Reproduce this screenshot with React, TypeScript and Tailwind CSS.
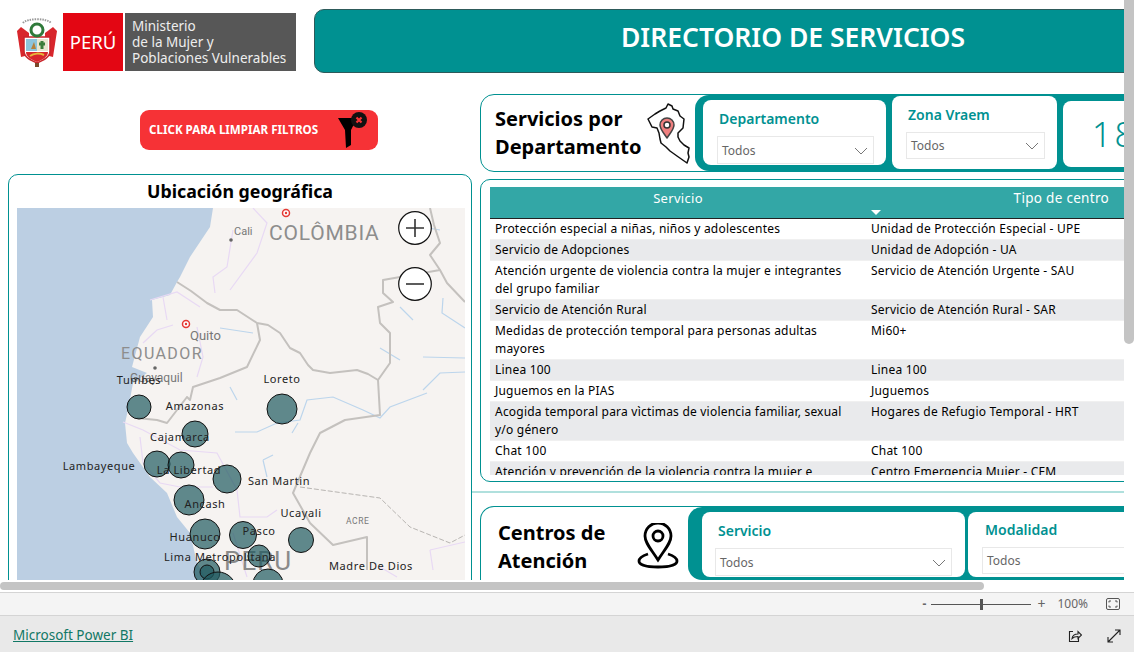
const rows = [
  { a: ["Protección especial a niñas, niños y adolescentes"], b: "Unidad de Protección Especial - UPE" },
  { a: ["Servicio de Adopciones"], b: "Unidad de Adopción - UA" },
  { a: ["Atención urgente de violencia contra la mujer e integrantes", "del grupo familiar"], b: "Servicio de Atención Urgente - SAU" },
  { a: ["Servicio de Atención Rural"], b: "Servicio de Atención Rural - SAR" },
  { a: ["Medidas de protección temporal para personas adultas", "mayores"], b: "Mi60+" },
  { a: ["Linea 100"], b: "Linea 100" },
  { a: ["Juguemos en la PIAS"], b: "Juguemos" },
  { a: ["Acogida temporal para vìctimas de violencia familiar, sexual", "y/o género"], b: "Hogares de Refugio Temporal - HRT" },
  { a: ["Chat 100"], b: "Chat 100" },
  { a: ["Atención y prevención de la violencia contra la mujer e"], b: "Centro Emergencia Mujer - CEM" },
];

const bubbles = [
  [139, 407, 12], [282, 409, 15], [195, 434, 13], [157, 464, 13], [181, 465, 13],
  [227, 479, 14], [189, 500, 15], [205, 534, 15], [243, 535, 13.5], [301, 540, 12.5],
  [259, 556, 11], [207, 572, 13], [207, 572, 7], [218, 590, 18], [268, 584, 15],
];

const places: [string, number, number][] = [
  ["Tumbes", 139, 380], ["Loreto", 282, 379], ["Amazonas", 195, 406], ["Cajamarca", 180, 437],
  ["Lambayeque", 99, 466], ["La Libertad", 189, 470], ["San Martin", 279, 481], ["Ancash", 205, 504],
  ["Ucayali", 301, 513], ["Pasco", 259, 531], ["Huanuco", 195, 537], ["Lima Metropolitana", 220, 557],
  ["Madre De Dios", 371, 566],
];

function Chevron() {
  return (
    <svg width="14" height="8" viewBox="0 0 14 8" fill="none" stroke="#777" strokeWidth="1">
      <path d="M1 1l6 6 6-6" />
    </svg>
  );
}

function Dropdown({ className }: { className: string }) {
  return (
    <div className={`flex items-center justify-between border border-[#e8e8e8] pl-[4px] pr-[5px] pt-[1px] text-[12px] text-[#666] ${className}`}>
      <span>Todos</span>
      <Chevron />
    </div>
  );
}

function Escudo() {
  return (
    <svg width="42" height="54" viewBox="0 0 42 54">
      <path d="M5 12 1 16l4 26 8-2V18z" fill="#d8262c" />
      <path d="M37 12l4 4-4 26-8-2V18z" fill="#d8262c" />
      <path d="M8 22h26v14c0 6-6 9-13 12C14 45 8 42 8 36z" fill="#fff" stroke="#c9252b" strokeWidth="1.5" />
      <rect x="10" y="24" width="11" height="12" fill="#8cc4dc" />
      <rect x="21" y="24" width="11" height="12" fill="#e9e6cf" />
      <path d="M15 34l3-7 2 7z" fill="#b5803a" />
      <path d="M26 34v-8m-3 3h6" stroke="#3c7d3a" strokeWidth="3" />
      <path d="M10 37h22c0 5-6 8-11 10-5-2-11-5-11-10z" fill="#d8262c" />
      <path d="M14 41c4-3 10-3 14-1" stroke="#e6b93a" strokeWidth="2" fill="none" />
      <circle cx="21" cy="15" r="6" fill="none" stroke="#2f7a3a" strokeWidth="3" />
      <rect x="19" y="48" width="4" height="4" fill="#7a4a2a" />
      <path d="M7 8C11 3 31 3 35 8" fill="none" stroke="#999" strokeWidth="2" strokeDasharray="1.5 1" />
    </svg>
  );
}

function MapaPeru() {
  return (
    <svg width="44" height="62" viewBox="0 0 44 62" fill="none" stroke="#111" strokeWidth="1.5" strokeLinejoin="round">
      <path d="M21 1L19 5 13 8 8 11 1 16 3 20 5 24 10 25 12 30 13 36 14 40 19 44 23 48 30 53 40 60 42 54 41 50 42 45 37 42 33 38 31 34 31 30 36 25 37 16 33 13 31 8 26 6 25 3z" />
      <path d="M20 35c-4-6-7-9-7-13a7 7 0 0114 0c0 4-3 7-7 13z" fill="#f08080" stroke="#444" />
      <circle cx="20" cy="22" r="3" fill="#fff" stroke="#333" />
    </svg>
  );
}

function PinIcon() {
  return (
    <svg width="42" height="46" viewBox="0 0 42 46" fill="none" stroke="#000" strokeWidth="2.8">
      <path d="M21 37C14 26 8 20 8 13a13 13 0 0126 0c0 7-6 13-13 24z" />
      <circle cx="21" cy="13" r="5" />
      <path d="M11 31c-6 2-9 4-9 7 0 4 8 6 19 6s19-2 19-6c0-3-3-5-9-7" />
    </svg>
  );
}

function FunnelIcon() {
  return (
    <svg width="32" height="36" viewBox="0 0 32 36">
      <path d="M1 6h19l-6 12v15l-5 3-1-18z" fill="#000" />
      <circle cx="22" cy="8" r="8" fill="#111" />
      <path d="M19.500 5.500l5 5m0-5l-5 5" stroke="#f63236" strokeWidth="2.200" />
    </svg>
  );
}

function GeoMap() {
  return (
    <div className="relative h-[372px] w-[448px] shrink-0 overflow-hidden bg-[#bccfe3]">
      <svg className="block" width="448" height="372" viewBox="17 208 448 372" fill="none">
        <path
          d="M213 208L210 227 190 257 180 277 177 282 170 295 152 300 153 317 140 337 132 367 147 373 133 383 128 410 125 423 127 443 133 453 150 477 167 493 177 517 190 533 197 563 207 580H465V208Z"
          fill="#f6f3f1"
        />
        <g stroke="#e8d9f4" strokeWidth="1.2">
          <path d="M253 208L267 223 257 253 230 290M233 230L227 267 213 277 215 293" />
          <path d="M150 300L177 292 200 307M173 325L157 330 143 343M197 327L203 357 197 377M163 297L167 320" />
          <path d="M123 422L143 430 180 450 217 453 237 490 240 517 267 517 277 510M140 437L143 463 160 483 180 487 213 487M233 533L247 577" />
          <path d="M430 550L465 542M430 550L433 570M380 567L397 577" />
        </g>
        <g stroke="#bcd5ec" strokeWidth="1.2">
          <path d="M220 328L253 333M443 298L442 313 465 328M400 307L413 320M423 357L465 358M380 348L400 360" />
          <path d="M423 390L440 373 465 372M230 387L237 400M235 432L257 432 277 423 300 420 307 400 333 397 363 410 380 418 390 407 427 393" />
          <path d="M263 460L267 477M263 460L273 455M292 433L298 423M440 230L428 228" />
        </g>
        <g stroke="#c4c1be" strokeWidth="2" strokeLinejoin="round">
          <path d="M177 282L191 291 207 303 220 310 237 310 257 323 268 325 280 333 290 348 300 353 308 365 313 370 330 373 357 370 368 374 378 380" />
          <path d="M257 323L260 340 247 367 220 378 193 387 190 400 187 397 167 423 157 420 137 418" />
          <path d="M430 208L434 225 440 243 430 255 440 270 383 280V293L393 302 378 307 380 323 390 333V363L378 380 380 415 345 420 320 433 310 453 293 493 310 523 333 545 367 537V570" />
          <path d="M440 270L447 283 465 302" />
        </g>
        <path d="M300 487L380 498 410 527 450 543 465 535" stroke="#b8b5b2" strokeWidth="1" strokeDasharray="5 2" />
        <circle cx="286" cy="213" r="3.500" fill="#fff" stroke="#e53935" strokeWidth="1.500" />
        <circle cx="286" cy="213" r="1.200" fill="#e53935" />
        <circle cx="186" cy="324" r="3.500" fill="#fff" stroke="#e53935" strokeWidth="1.500" />
        <circle cx="186" cy="324" r="1.200" fill="#e53935" />
        <circle cx="231" cy="240" r="1.800" fill="#666" />
        <circle cx="155" cy="368" r="1.800" fill="#666" />
        <text x="234" y="235" fontSize="11" fill="#777" fontFamily="Roboto, sans-serif">Cali</text>
        <text x="269" y="240" fontSize="21" fill="#8d8d8d" letterSpacing="0.8" fontFamily="Roboto, sans-serif">COLÔMBIA</text>
        <text x="190" y="340" fontSize="13" fill="#777" fontFamily="Roboto, sans-serif">Quito</text>
        <text x="121" y="359" fontSize="16" fill="#8d8d8d" letterSpacing="1.400" fontFamily="Roboto, sans-serif">EQUADOR</text>
        <text x="130" y="382" fontSize="12" fill="#777" fontFamily="Roboto, sans-serif">Guayaquil</text>
        <text x="346" y="524" fontSize="8.500" fill="#777" letterSpacing="0.6" fontFamily="Roboto, sans-serif">ACRE</text>
        <text x="224" y="570" fontSize="26" fill="#8a8a8a" letterSpacing="1" fontFamily="Roboto, sans-serif">PERU</text>
        {bubbles.map(([cx, cy, r], i) => (
          <circle key={i} cx={cx} cy={cy} r={r} fill="#1f5a60" fillOpacity="0.7" stroke="#111" strokeWidth="1" />
        ))}
        {places.map(([name, x, y]) => (
          <text key={name} x={x} y={y + 4} textAnchor="middle" fontSize="11" fill="#222" letterSpacing="0.6">{name}</text>
        ))}
        <circle cx="415" cy="228" r="16.300" fill="#fff" stroke="#111" strokeWidth="1.200" />
        <path d="M406 228h18M415 219v18" stroke="#333" strokeWidth="1.600" />
        <circle cx="415" cy="284" r="16.300" fill="#fff" stroke="#111" strokeWidth="1.200" />
        <path d="M406 284h18" stroke="#333" strokeWidth="1.600" />
      </svg>
    </div>
  );
}

export default function App() {
  return (
    <div className="flex h-[652px] w-[1134px] flex-col overflow-hidden bg-white font-['Noto_Sans',sans-serif] text-black">
      <div className="flex h-[580px] shrink-0">
        <div className="w-[1124px] overflow-hidden">
          {/* cabecera */}
          <div className="flex h-[94px] pl-[16px] pt-[9px]">
            <div className="mt-[4px] flex h-[58px] w-[280px] shrink-0 items-center">
              <div className="w-[47px] shrink-0"><Escudo /></div>
              <div className="flex h-[58px] w-[60px] shrink-0 items-center justify-center bg-[#e30613] text-[18.5px] text-white">PERÚ</div>
              <div className="ml-[2px] flex h-[58px] w-[171px] shrink-0 flex-col justify-center bg-[#575757] pl-[7px] text-[13.5px] leading-[16px] text-[#eee]">
                <span>Ministerio</span>
                <span>de la Mujer y</span>
                <span className="whitespace-nowrap">Poblaciones Vulnerables</span>
              </div>
            </div>
            <div className="ml-[18px] flex h-[64px] w-[958px] shrink-0 items-center justify-center rounded-[10px] border border-[#2d5a5a] bg-[#009191] pb-[6px] text-[26.5px] font-semibold text-white">
              DIRECTORIO DE SERVICIOS
            </div>
          </div>

          <div className="flex">
            {/* columna izquierda */}
            <div className="w-[480px] shrink-0 pt-[16px]">
              <div className="ml-[140px] flex h-[40px] w-[238px] items-center justify-between rounded-[9px] bg-[#f63236] pl-[9px] pr-[9px] text-[11.6px] font-bold text-white">
                <span>CLICK PARA LIMPIAR FILTROS</span>
                <FunnelIcon />
              </div>
              <div className="ml-[8px] mt-[24px] h-[420px] w-[464px] rounded-t-[10px] border border-[#009191] px-[8px]">
                <div className="h-[33px] pt-[3px] text-center text-[17.8px] font-bold leading-[26px]">Ubicación geográfica</div>
                <GeoMap />
              </div>
            </div>

            {/* columna derecha */}
            <div className="w-[644px] shrink-0">
              <div className="flex h-[78px] w-[660px] rounded-l-[14px] border border-[#009191]">
                <div className="w-[151px] shrink-0 pl-[14px] pt-[10px] text-[20px] font-bold leading-[28px]">
                  Servicios por<br />Departamento
                </div>
                <div className="w-[63px] shrink-0 pl-[15px] pt-[8px]"><MapaPeru /></div>
                <div className="flex flex-1 gap-[6px] rounded-l-[14px] bg-[#009191] pl-[8px]">
                  <div className="mt-[5px] h-[65px] w-[183px] shrink-0 rounded-[8px] bg-white pl-[14px] pr-[12px] pt-[9px]">
                    <div className="h-[27px] pl-[2px] text-[14px] font-semibold leading-[20px] text-[#009191]">Departamento</div>
                    <Dropdown className="h-[28px] w-[157px]" />
                  </div>
                  <div className="mt-[1px] h-[73px] w-[165px] shrink-0 rounded-[8px] bg-white pl-[14px] pt-[9px]">
                    <div className="h-[27px] pl-[2px] text-[14px] font-semibold leading-[20px] text-[#009191]">Zona Vraem</div>
                    <Dropdown className="h-[27px] w-[139px]" />
                  </div>
                  <div className="mt-[6px] h-[66px] w-[120px] shrink-0 rounded-[8px] bg-white pl-[29px] text-[34px] font-light leading-[66px] tracking-[3px] text-[#009191]">
                    180
                  </div>
                </div>
              </div>

              <div className="mt-[7px] h-[303px] w-[660px] rounded-l-[10px] border border-[#009191] pl-[9px] pt-[7px]">
                <div className="h-[288px] overflow-hidden text-[12px]">
                  <div className="relative flex h-[32px] border-b border-[#222] bg-[#33a7a6] text-[13px] tracking-[0.3px] text-white">
                    <div className="w-[376px] shrink-0 pt-[2px] text-center leading-[18px]">Servicio</div>
                    <div className="w-[243px] shrink-0 whitespace-nowrap pt-[2px] text-right text-[13.5px] leading-[18px]">Tipo de centro</div>
                    <div className="absolute left-[381px] top-[23px] h-0 w-0 border-x-[5px] border-t-[5px] border-x-transparent border-t-white" />
                  </div>
                  {rows.map((row, i) => (
                    <div key={row.b} className={`flex border-b border-[#f0f0f0] pb-[1px] pt-[1px] leading-[18px] tracking-[0.21px] ${i % 2 ? "bg-[#e9eaec]" : "bg-white"}`}>
                      <div className="w-[381px] shrink-0 pl-[5px]">
                        {row.a.map(line => <div key={line}>{line}</div>)}
                      </div>
                      <div className="flex-1 whitespace-nowrap">{row.b}</div>
                    </div>
                  ))}
                </div>
              </div>

              <div className="-ml-[8px] mt-[9px] h-[2px] w-[660px] bg-[#b0e0dd]" />

              <div className="mt-[13px] flex h-[74px] w-[660px] rounded-tl-[14px] border-l border-t border-[#009191]">
                <div className="w-[145px] shrink-0 pl-[17px] pt-[12px] text-[20px] font-bold leading-[28px]">
                  Centros de<br />Atención
                </div>
                <div className="w-[62px] shrink-0 pl-[11px] pt-[16px]"><PinIcon /></div>
                <div className="flex flex-1 gap-[3px] rounded-l-[14px] bg-[#009191] pl-[14px] pt-[5px]">
                  <div className="h-[65px] w-[263px] shrink-0 rounded-[8px] bg-white pl-[13px] pt-[9px]">
                    <div className="h-[27px] pl-[3px] text-[14px] font-semibold leading-[20px] text-[#009191]">Servicio</div>
                    <Dropdown className="h-[28px] w-[237px]" />
                  </div>
                  <div className="h-[65px] w-[200px] shrink-0 rounded-[8px] bg-white pl-[14px] pt-[8px]">
                    <div className="h-[27px] pl-[3px] text-[14px] font-semibold leading-[20px] text-[#009191]">Modalidad</div>
                    <Dropdown className="h-[27px] w-[240px]" />
                  </div>
                </div>
              </div>
            </div>
          </div>
        </div>
        <div className="w-[10px] shrink-0">
          <div className="h-[344px] w-full rounded-b-[5px] bg-[#c4c4c4]" />
        </div>
      </div>

      {/* barras inferiores */}
      <div className="h-[12px] shrink-0 bg-white pt-[2px]">
        <div className="h-[8px] w-[984px] rounded-[4px] bg-[#c4c4c4]" />
      </div>
      <div className="flex h-[24px] shrink-0 items-center justify-end border-b border-t border-[#d4d4d4] bg-[#f4f4f4] pr-[14px] text-[12px] text-[#666]">
        <span className="mr-[5px] font-bold">-</span>
        <div className="relative mr-[6px] h-[1px] w-[100px] bg-[#555]">
          <div className="absolute left-[49px] top-[-5px] h-[11px] w-[3px] bg-[#555]" />
        </div>
        <span className="mr-[12px] text-[14px] leading-none">+</span>
        <span className="mr-[18px]">100%</span>
        <svg width="14" height="12" viewBox="0 0 14 12" fill="none" stroke="#555">
          <rect x="0.5" y="0.5" width="13" height="11" rx="1.5" />
          <path d="M3 4.5V3h2M9 3h2v1.5M11 7.5V9H9M5 9H3V7.5" />
        </svg>
      </div>
      <div className="flex flex-1 items-center justify-between bg-[#e9e9e9] pl-[13px] pr-[13px] pt-[3px] text-[13.5px]">
        <span className="text-[#117865] underline">Microsoft Power BI</span>
        <div className="flex items-center gap-[25px]">
          <svg width="14" height="14" viewBox="0 0 14 14" fill="none" stroke="#222" strokeWidth="1.1">
            <path d="M5 2.500H1.500v10h9V9" />
            <path d="M4 9.500c.5-3 3-4.500 6-4.500V2.500l3.500 3.500L10 9.500V7.500c-2.500 0-4.500.500-6 2z" />
          </svg>
          <svg width="14" height="14" viewBox="0 0 14 14" fill="none" stroke="#222" strokeWidth="1.1">
            <path d="M1 13L13 1M8 1h5v5M1 8v5h5" />
          </svg>
        </div>
      </div>
    </div>
  );
}
